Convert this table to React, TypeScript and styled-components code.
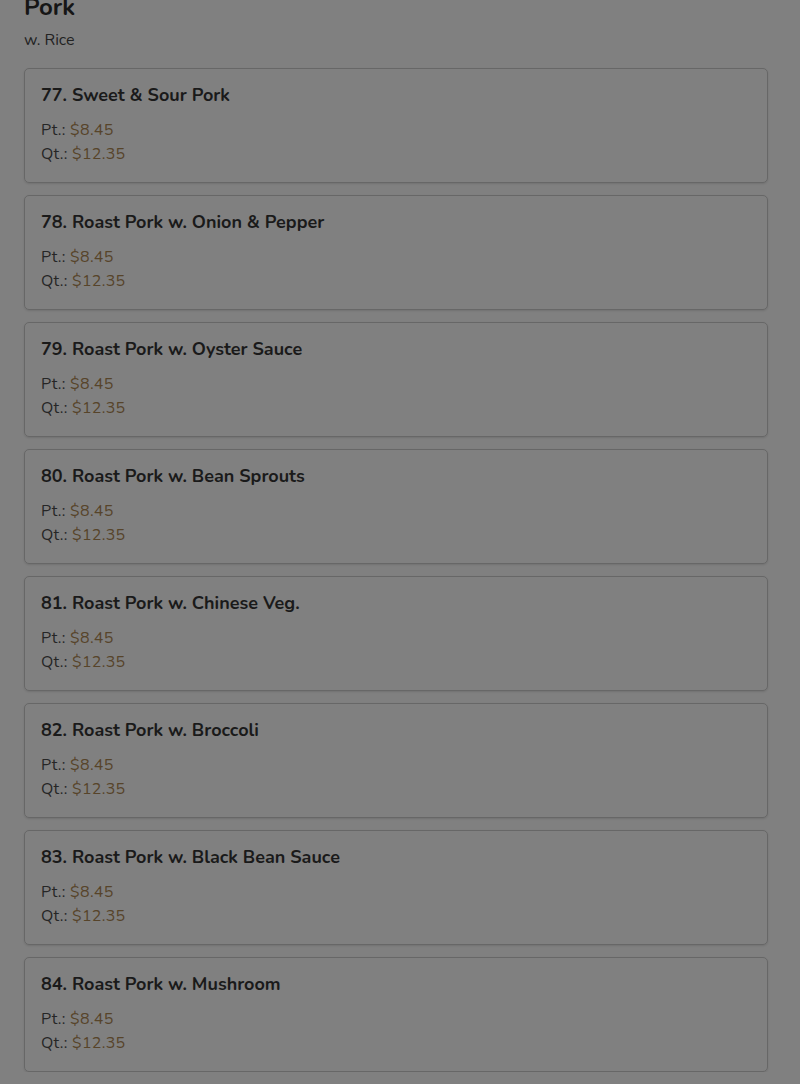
import * as React from 'react';
import styled, { createGlobalStyle } from 'styled-components';

const GlobalStyle = createGlobalStyle`
  html, body {
    margin: 0;
    padding: 0;
    background: #808080;
    overflow: hidden;
  }
  body {
    font-family: 'Nunito', Lato, 'Noto Sans', sans-serif;
  }
`;

interface Item {
  num: number;
  name: string;
}

const items: Item[] = [
  { num: 77, name: 'Sweet & Sour Pork' },
  { num: 78, name: 'Roast Pork w. Onion & Pepper' },
  { num: 79, name: 'Roast Pork w. Oyster Sauce' },
  { num: 80, name: 'Roast Pork w. Bean Sprouts' },
  { num: 81, name: 'Roast Pork w. Chinese Veg.' },
  { num: 82, name: 'Roast Pork w. Broccoli' },
  { num: 83, name: 'Roast Pork w. Black Bean Sauce' },
  { num: 84, name: 'Roast Pork w. Mushroom' },
];

// page is scrolled a little, heading sits partly above the fold
const Section = styled.section`
  padding: 0 32px 0 24px;
  margin-top: -9px;
`;

const Heading = styled.h2`
  margin: 0;
  font-size: 24px;
  line-height: 32px;
  font-weight: 700;
  color: #161616;
`;

const Subtitle = styled.p`
  margin: 6px 0 0;
  font-size: 16px;
  line-height: 22px;
  color: #222;
`;

const List = styled.div`
  display: flex;
  flex-direction: column;
  gap: 12px;
  margin-top: 17px;
`;

const Card = styled.div`
  border: 1px solid #676767;
  border-radius: 5px;
  padding: 15px 16px 16px;
  box-shadow: 0 1px 2px rgba(0, 0, 0, 0.12);
`;

const Title = styled.h3`
  margin: 0 0 12px;
  font-size: 18px;
  line-height: 22px;
  font-weight: 700;
  color: #1a1a1a;
`;

const PriceRow = styled.div`
  font-size: 16px;
  line-height: 24px;
  letter-spacing: 0.3px;
  color: #262626;
`;

const Price = styled.span`
  color: #57442a;
`;

export default function App() {
  return (
    <>
      <GlobalStyle />
      <Section>
        <Heading>Pork</Heading>
        <Subtitle>w. Rice</Subtitle>
        <List>
          {items.map((it) => (
            <Card key={it.num}>
              <Title>
                {it.num}. {it.name}
              </Title>
              <PriceRow>
                Pt.: <Price>$8.45</Price>
              </PriceRow>
              <PriceRow>
                Qt.: <Price>$12.35</Price>
              </PriceRow>
            </Card>
          ))}
        </List>
      </Section>
    </>
  );
}
